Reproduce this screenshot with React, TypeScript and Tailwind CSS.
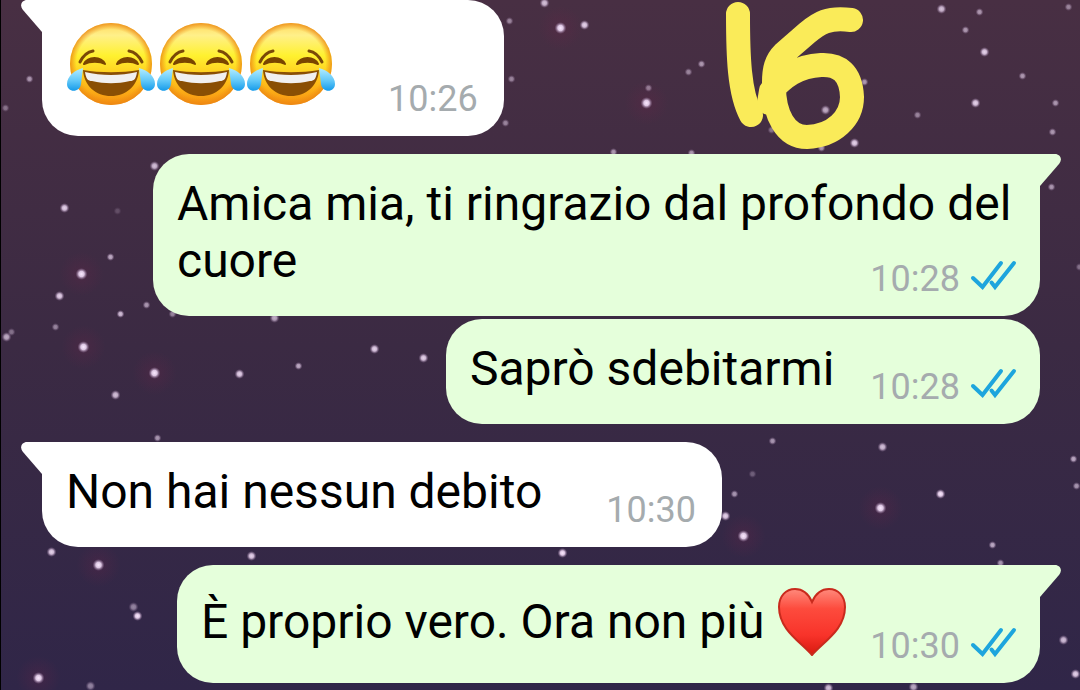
const stars: [number, number, number, number][] = [
  [29, 79, 2, 0.6], [5, 108, 2, 0.4], [544, 3, 3, 0.8], [560, 28, 4, 1], [584, 25, 3, 0.9], [509, 21, 2, 0.5],
  [511, 79, 2, 0.5], [505, 123, 2, 0.5], [701, 64, 2, 0.6], [688, 72, 2, 0.5], [648, 88, 2, 0.5], [646, 103, 4, 1],
  [613, 152, 2, 0.6], [691, 153, 2, 0.6], [941, 9, 3, 0.8], [979, 12, 2, 0.6], [965, 30, 2, 0.6], [984, 52, 3, 0.9],
  [1022, 76, 2, 0.6], [1068, 7, 2, 0.5], [975, 103, 3, 0.9], [1055, 103, 2, 0.6], [1052, 132, 2, 0.6], [917, 115, 2, 0.5],
  [864, 82, 2, 0.6], [825, 110, 3, 0.7], [854, 143, 3, 0.9], [821, 148, 2, 0.6], [771, 130, 2, 0.4], [1051, 187, 2, 0.6],
  [154, 166, 3, 0.8], [64, 208, 3, 0.9], [117, 211, 2, 0.2], [110, 257, 2, 0.7], [81, 274, 4, 1], [59, 296, 3, 0.9],
  [146, 305, 2, 0.6], [120, 314, 2, 0.8], [55, 327, 2, 0.5], [6, 337, 3, 0.7], [11, 332, 2, 0.4], [83, 347, 4, 1],
  [154, 373, 4, 1], [115, 395, 3, 0.8], [157, 438, 2, 0.6], [239, 374, 3, 0.9], [298, 366, 2, 0.7], [274, 318, 3, 0.7],
  [374, 349, 3, 0.9], [423, 358, 3, 0.9], [172, 314, 2, 0.5], [772, 441, 2, 0.6], [752, 474, 2, 0.3], [734, 494, 2, 0.6],
  [725, 516, 3, 0.9], [743, 536, 4, 1], [882, 447, 3, 0.8], [880, 508, 4, 1], [940, 494, 3, 1], [1073, 459, 2, 0.7],
  [1076, 486, 2, 0.6], [992, 545, 2, 0.7], [1000, 563, 2, 0.6], [51, 552, 3, 0.9], [98, 565, 4, 1], [133, 607, 3, 0.5],
  [137, 616, 3, 1], [38, 678, 4, 1], [90, 686, 3, 0.5], [1063, 640, 3, 0.8], [1075, 674, 3, 0.9], [828, 688, 3, 0.8],
  [913, 687, 3, 0.7], [251, 556, 3, 0.9], [562, 553, 3, 1], [1079, 267, 2, 0.4],
];

function Starfield() {
  return (
    <svg className="absolute inset-0 h-full w-full" viewBox="0 0 1080 690" preserveAspectRatio="xMidYMid slice" aria-hidden="true">
      <defs>
        <radialGradient id="star">
          <stop offset="0" stopColor="#fbeaff" />
          <stop offset="0.45" stopColor="#dcc6e2" />
          <stop offset="1" stopColor="#8e7096" stopOpacity="0" />
        </radialGradient>
        <radialGradient id="haze">
          <stop offset="0" stopColor="#6a2448" stopOpacity="0.3" />
          <stop offset="1" stopColor="#6a2448" stopOpacity="0" />
        </radialGradient>
      </defs>
      {stars.map(([x, y, r, o], i) => (
        <g key={i} opacity={o}>
          {r > 3 && <circle cx={x} cy={y} r="22" fill="url(#haze)" />}
          <circle cx={x} cy={y} r={r + 2} fill="url(#star)" />
        </g>
      ))}
    </svg>
  );
}

function Doodle() {
  return (
    <svg className="absolute left-[718px] top-0 h-[152px] w-[150px]" viewBox="720 0 150 152" fill="none" stroke="#faeb59" strokeWidth="24" strokeLinecap="round" strokeLinejoin="round" role="img" aria-label="16">
      <path d="M739 14C739 55 740 93 752 115" />
      <path d="M852 20C829 17 820 23 808 33L785 53C777 61 775 69 775 82C774 115 787 137 808 137C835 136 853 118 853 97C852 73 840 64 822 65C798 66 784 78 772 91L770 103" />
    </svg>
  );
}

function Tail({ mine }: { mine: boolean }) {
  return (
    <svg
      className={mine ? 'absolute left-full top-0 h-8 w-[21px] text-[#e5ffdb]' : 'absolute right-full top-0 h-8 w-[21px] -scale-x-100 text-white'}
      viewBox="0 0 21 32"
      fill="currentColor"
      aria-hidden="true"
    >
      <path d="M0 0H15C20 0 23 5 19 10L0 32Z" />
    </svg>
  );
}

function Ticks() {
  return (
    <svg className="h-8 w-[46px] overflow-visible" viewBox="0 0 46 32" fill="none" stroke="#1da5dd" strokeWidth="4" strokeLinecap="round" role="img" aria-label="Letto">
      <path d="M3 15L12.500 24L31 0" />
      <path d="M21.500 19.500L25 24L44 0" />
    </svg>
  );
}

function Joy() {
  return (
    <svg className="h-[90px] w-[90px]" viewBox="0 0 90 90" role="img" aria-label="😂">
      <defs>
        <linearGradient id="face" x1="0" y1="0" x2="0" y2="1">
          <stop offset="0" stopColor="#ffd95c" />
          <stop offset="0.15" stopColor="#fff08a" />
          <stop offset="0.4" stopColor="#fff12f" />
          <stop offset="0.7" stopColor="#ffc21b" />
          <stop offset="1" stopColor="#f69011" />
        </linearGradient>
        <radialGradient id="rim">
          <stop offset="0.84" stopColor="#f08a12" stopOpacity="0" />
          <stop offset="1" stopColor="#ea8512" stopOpacity="0.8" />
        </radialGradient>
        <linearGradient id="drop" x1="0" y1="0" x2="0" y2="1">
          <stop offset="0" stopColor="#b5edff" />
          <stop offset="0.55" stopColor="#62c8f8" />
          <stop offset="1" stopColor="#159bea" />
        </linearGradient>
      </defs>
      <circle cx="45" cy="44" r="41" fill="url(#face)" />
      <circle cx="45" cy="44" r="41" fill="url(#rim)" />
      <path d="M14 42C17 36 21 32 27 31M76 42C73 36 69 32 63 31" fill="none" stroke="#7a4a08" strokeWidth="3" strokeLinecap="round" />
      <path d="M18 44C22 36 35 36 39 44C34 41 24 41 18 44ZM51 44C55 36 68 36 72 44C66 41 57 41 51 44Z" fill="#7a4500" stroke="#7a4500" strokeWidth="2" strokeLinejoin="round" />
      <path d="M17 50C34 53 56 53 73 50C72 66 60 76 45 76S18 66 17 50Z" fill="#8a4f04" />
      <path d="M19 52C35 56 55 56 71 52C70 59 68 61 64 61C51 64 39 64 26 61C22 61 20 59 19 52Z" fill="#f1f0f0" />
      <path d="M17 48C9 50 1 56 1 64C1 73 14 73 15 64Z" fill="url(#drop)" />
      <path d="M73 48C81 50 89 56 89 64C89 73 76 73 75 64Z" fill="url(#drop)" />
    </svg>
  );
}

function Heart() {
  return (
    <svg className="h-[70px] w-[70px]" viewBox="0 0 70 70" role="img" aria-label="❤️">
      <defs>
        <linearGradient id="heart" x1="0" y1="0" x2="0" y2="1">
          <stop offset="0" stopColor="#ff8a7c" />
          <stop offset="0.3" stopColor="#fd4b3d" />
          <stop offset="0.7" stopColor="#f8332a" />
          <stop offset="1" stopColor="#d8190f" />
        </linearGradient>
      </defs>
      <path d="M36 69C25 56 3 44 3 21C3 10 10 3 19 3C28 3 33 9 36 16C39 9 44 3 53 3C62 3 69 10 69 21C69 44 47 56 36 69Z" fill="url(#heart)" stroke="#c92a1d" strokeWidth="2" />
    </svg>
  );
}

type BubbleProps = {
  mine?: boolean;
  tail?: boolean;
  // text longer than one line: the time floats beside its last line
  wrap?: boolean;
  time: string;
  className: string;
  children: React.ReactNode;
};

function Bubble({ mine = false, tail = false, wrap = false, time, className, children }: BubbleProps) {
  const side = mine ? 'self-end bg-[#e5ffdb] pr-6' : 'self-start bg-white pr-[26px]';
  const corner = !tail ? '' : mine ? 'rounded-tr-none' : 'rounded-tl-none';
  return (
    <article className={`relative rounded-[36px] pb-[17px] pl-6 leading-[57px] ${wrap ? 'flow-root' : 'flex items-end'} ${side} ${corner} ${className}`}>
      {tail && <Tail mine={mine} />}
      {children}
      <div className={`flex shrink-0 items-center gap-[10px] text-4xl leading-10 text-[#a5abae] ${wrap ? 'float-right mt-[27px]' : ''}`}>
        <time>{time}</time>
        {mine && <Ticks />}
      </div>
    </article>
  );
}

export default function App() {
  return (
    <main className="relative min-h-screen overflow-hidden border-l border-black bg-linear-to-b from-[#482f43] via-[#3b2a43] to-[#302648] font-['Roboto',sans-serif] text-5xl text-black">
      <Starfield />
      <div className="relative flex flex-col gap-[18px] pl-[41px] pr-10">
        <Bubble tail time="10:26" className="gap-[52px] pt-5">
          <div className="flex pb-[9px]">
            <Joy />
            <Joy />
            <Joy />
          </div>
        </Bubble>
        <div className="flex flex-col gap-[3px]">
          <Bubble mine tail wrap time="10:28" className="ml-[111px] pt-[21px]">
            Amica mia, ti ringrazio dal profondo del cuore
          </Bubble>
          <Bubble mine time="10:28" className="gap-9 pt-[21px]">
            <p className="pb-[10px]">Saprò sdebitarmi</p>
          </Bubble>
        </div>
        <Bubble tail time="10:30" className="gap-16 pt-[21px]">
          <p className="pb-[10px]">Non hai nessun debito</p>
        </Bubble>
        <Bubble mine tail time="10:30" className="gap-6 pt-[21px]">
          <p className="flex items-center gap-3 pb-[10px]">
            È proprio vero. Ora non più <Heart />
          </p>
        </Bubble>
      </div>
      <Doodle />
    </main>
  );
}
